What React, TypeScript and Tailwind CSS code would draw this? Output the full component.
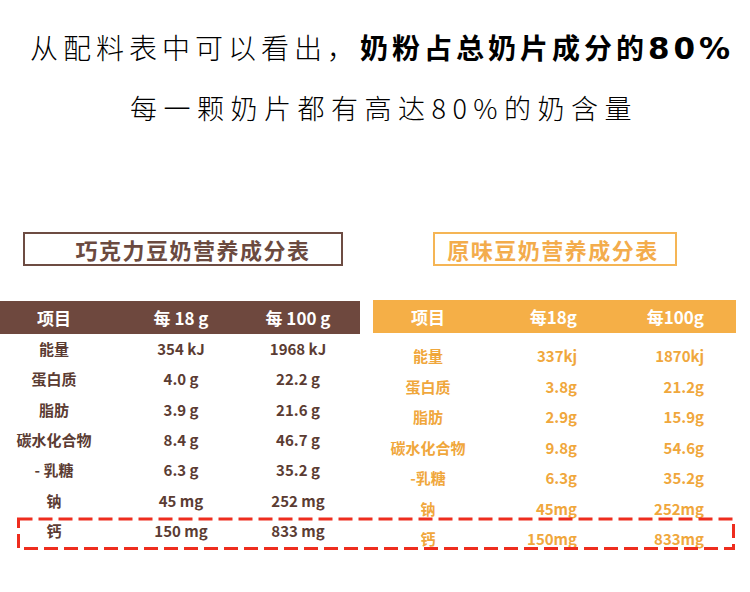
import React from "react";

const leftRows: [string, string, string][] = [
  ["能量", "354 kJ", "1968 kJ"],
  ["蛋白质", "4.0 g", "22.2 g"],
  ["脂肪", "3.9 g", "21.6 g"],
  ["碳水化合物", "8.4 g", "46.7 g"],
  ["- 乳糖", "6.3 g", "35.2 g"],
  ["钠", "45 mg", "252 mg"],
  ["钙", "150 mg", "833 mg"],
];

const rightRows: [string, string, string][] = [
  ["能量", "337kj", "1870kj"],
  ["蛋白质", "3.8g", "21.2g"],
  ["脂肪", "2.9g", "15.9g"],
  ["碳水化合物", "9.8g", "54.6g"],
  ["-乳糖", "6.3g", "35.2g"],
  ["钠", "45mg", "252mg"],
  ["钙", "150mg", "833mg"],
];

export default function App() {
  return (
    <div
      className="relative w-[750px] h-[592px] bg-white overflow-hidden"
      style={{ fontFamily: '"Noto Sans CJK SC", "Noto Sans", sans-serif' }}
    >
      {/* headline */}
      <div className="pt-[28px] flex justify-center pl-[14px]">
        <p className="text-[28px] leading-[38px] text-black whitespace-nowrap">
          <span className="font-light tracking-[5px]">从配料表中可以看出，</span>
          <span className="font-bold tracking-[4px]">奶粉占总奶片成分的</span>
          <span
            className="font-bold text-[31px] tracking-[4px]"
            style={{ fontFamily: '"DejaVu Sans", sans-serif' }}
          >
            80%
          </span>
        </p>
      </div>
      <div className="mt-[22px] flex justify-center pl-[18px]">
        <p className="text-[27px] leading-[38px] font-light tracking-[6.5px] text-black whitespace-nowrap">
          每一颗奶片都有高达80%的奶含量
        </p>
      </div>

      {/* tables */}
      <div className="mt-[105px] flex">
        {/* left */}
        <div className="w-[360px]">
          <div className="ml-[23px] w-[320px] h-[34px] border-2 border-[#6d4c43] flex items-center justify-center pl-[20px]">
            <span className="text-[22px] font-bold tracking-[1.5px] text-[#6b4a40] leading-none">
              巧克力豆奶营养成分表
            </span>
          </div>
          <div className="mt-[35px] h-[33px] bg-[#6e483e] grid grid-cols-[108px_146px_88px] items-center text-white text-[17px] font-bold">
            <div className="text-center">项目</div>
            <div className="text-center">每 18 g</div>
            <div className="text-center">每 100 g</div>
          </div>
          <div>
            {leftRows.map((r) => (
              <div
                key={r[0]}
                className="h-[30.33px] grid grid-cols-[108px_146px_88px] items-center text-[15px] font-semibold text-[#5b3c33]"
              >
                <div className="text-center">{r[0]}</div>
                <div className="text-center">{r[1]}</div>
                <div className="text-center">{r[2]}</div>
              </div>
            ))}
          </div>
        </div>

        {/* right */}
        <div className="ml-[13px] w-[363px]">
          <div className="ml-[60px] w-[244px] h-[34px] border-2 border-[#f5b555] flex items-center justify-center pr-[4px]">
            <span className="text-[22px] font-bold tracking-[1.5px] text-[#f3ac4c] leading-none">
              原味豆奶营养成分表
            </span>
          </div>
          <div className="mt-[34px] h-[33px] bg-[#f5af47] grid grid-cols-[110px_94px_127px] items-center text-white text-[17px] font-bold">
            <div className="text-center">项目</div>
            <div className="text-right">每18g</div>
            <div className="text-right">每100g</div>
          </div>
          <div className="pt-[8px]">
            {rightRows.map((r) => (
              <div
                key={r[0]}
                className="h-[30.5px] grid grid-cols-[110px_94px_127px] items-center text-[15px] font-semibold text-[#f0a73c]"
              >
                <div className="text-center">{r[0]}</div>
                <div className="text-right">{r[1]}</div>
                <div className="text-right">{r[2]}</div>
              </div>
            ))}
          </div>
        </div>
      </div>

      {/* red dashed highlight */}
      <svg
        className="absolute left-0 top-0 pointer-events-none"
        width="750"
        height="592"
        viewBox="0 0 750 592"
      >
        <rect
          x="18.5"
          y="519"
          width="715"
          height="29.5"
          fill="none"
          stroke="#ee2d1e"
          strokeWidth="3"
          strokeDasharray="14 6"
        />
      </svg>
    </div>
  );
}
